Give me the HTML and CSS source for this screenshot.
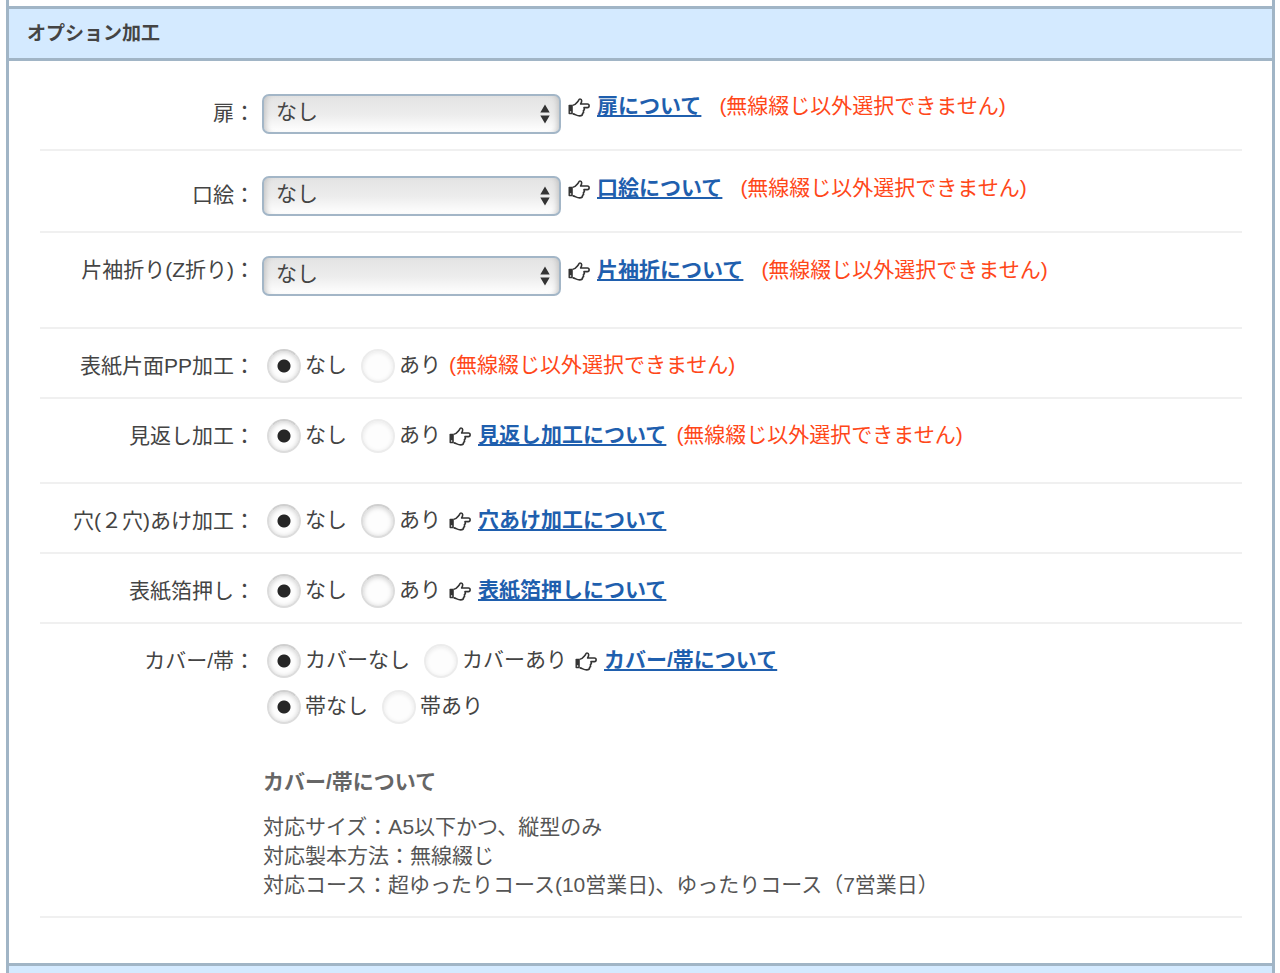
FILE: index.html
```
<!DOCTYPE html>
<html lang="ja">
<head>
<meta charset="utf-8">
<title>オプション加工</title>
<link rel="stylesheet" href="styles.css">
</head>
<body>
<svg class="defs" aria-hidden="true">
  <symbol id="hand" viewBox="0 0 22 19">
    <path d="M0.5 7.5Q0.5 6.7 1.3 6.7H4.8V16.3H1.3Q0.5 16.3 0.5 15.5Z" fill="#333"/>
    <circle cx="2.6" cy="14" r="0.8" fill="#fff"/>
    <path d="M4.8 7.3C7.2 7.2 8.6 5 10 3.3C10.7 2.4 10.8 1 12 1C14.3 1 14 4 12.6 6H19.4C21.7 6 21.7 9.6 19.4 9.6H16C16.7 11 16.3 12 15.4 12.7C15.9 14 15.4 14.9 14.6 15.4C14.6 17.2 13.4 17.9 11.6 17.9C8.6 17.9 7.4 16.2 4.8 15.9" fill="none" stroke="#333" stroke-width="1.6" stroke-linejoin="round"/>
  </symbol>
  <symbol id="arrows" viewBox="0 0 10 20">
    <path d="M5 0.5L9.7 8.5H0.3ZM5 19.5L9.7 11.5H0.3Z" fill="#333"/>
  </symbol>
</svg>
<form class="frame">
  <h2 class="bar">オプション加工</h2>
  <div class="rows">
    <div class="row row-select row-first">
      <label class="name" for="tobira">扉：</label>
      <div class="line">
        <span class="picker"><select id="tobira"><option>なし</option></select><svg class="arrows" aria-hidden="true"><use href="#arrows"/></svg></span>
        <svg class="hand" aria-hidden="true"><use href="#hand"/></svg>
        <a href="#tobira">扉について</a>
        <span class="warn">(無線綴じ以外選択できません)</span>
      </div>
    </div>
    <div class="row row-select">
      <label class="name" for="kuchie">口絵：</label>
      <div class="line">
        <span class="picker"><select id="kuchie"><option>なし</option></select><svg class="arrows" aria-hidden="true"><use href="#arrows"/></svg></span>
        <svg class="hand" aria-hidden="true"><use href="#hand"/></svg>
        <a href="#kuchie">口絵について</a>
        <span class="warn">(無線綴じ以外選択できません)</span>
      </div>
    </div>
    <div class="row row-select row-fold">
      <label class="name" for="sode">片袖折り(Z折り)：</label>
      <div class="line">
        <span class="picker"><select id="sode"><option>なし</option></select><svg class="arrows" aria-hidden="true"><use href="#arrows"/></svg></span>
        <svg class="hand" aria-hidden="true"><use href="#hand"/></svg>
        <a href="#sode">片袖折について</a>
        <span class="warn">(無線綴じ以外選択できません)</span>
      </div>
    </div>
    <div class="row" role="radiogroup" aria-labelledby="n-pp">
      <span class="name" id="n-pp">表紙片面PP加工：</span>
      <div class="line">
        <label class="choice"><input type="radio" name="pp" checked>なし</label>
        <label class="choice"><input type="radio" name="pp" disabled>あり</label>
        <span class="warn">(無線綴じ以外選択できません)</span>
      </div>
    </div>
    <div class="row row-tall" role="radiogroup" aria-labelledby="n-mikaeshi">
      <span class="name" id="n-mikaeshi">見返し加工：</span>
      <div class="line">
        <label class="choice"><input type="radio" name="mikaeshi" checked>なし</label>
        <label class="choice"><input type="radio" name="mikaeshi" disabled>あり</label>
        <svg class="hand" aria-hidden="true"><use href="#hand"/></svg>
        <a href="#n-mikaeshi">見返し加工について</a>
        <span class="warn">(無線綴じ以外選択できません)</span>
      </div>
    </div>
    <div class="row" role="radiogroup" aria-labelledby="n-ana">
      <span class="name" id="n-ana">穴(２穴)あけ加工：</span>
      <div class="line">
        <label class="choice"><input type="radio" name="ana" checked>なし</label>
        <label class="choice"><input type="radio" name="ana">あり</label>
        <svg class="hand" aria-hidden="true"><use href="#hand"/></svg>
        <a href="#n-ana">穴あけ加工について</a>
      </div>
    </div>
    <div class="row" role="radiogroup" aria-labelledby="n-haku">
      <span class="name" id="n-haku">表紙箔押し：</span>
      <div class="line">
        <label class="choice"><input type="radio" name="haku" checked>なし</label>
        <label class="choice"><input type="radio" name="haku">あり</label>
        <svg class="hand" aria-hidden="true"><use href="#hand"/></svg>
        <a href="#n-haku">表紙箔押しについて</a>
      </div>
    </div>
    <div class="row row-cover">
      <span class="name" id="n-cover">カバー/帯：</span>
      <div class="stack">
        <div class="line" role="radiogroup" aria-labelledby="n-cover">
          <label class="choice"><input type="radio" name="cover" checked>カバーなし</label>
          <label class="choice"><input type="radio" name="cover" disabled>カバーあり</label>
          <svg class="hand" aria-hidden="true"><use href="#hand"/></svg>
          <a href="#about-cover">カバー/帯について</a>
        </div>
        <div class="line" role="radiogroup" aria-labelledby="n-cover">
          <label class="choice"><input type="radio" name="obi" checked>帯なし</label>
          <label class="choice"><input type="radio" name="obi" disabled>帯あり</label>
        </div>
        <div class="about" id="about-cover">
          <h3>カバー/帯について</h3>
          <p>対応サイズ：A5以下かつ、縦型のみ<br>対応製本方法：無線綴じ<br>対応コース：超ゆったりコース(10営業日)、ゆったりコース（7営業日）</p>
        </div>
      </div>
    </div>
  </div>
  <div class="next"></div>
</form>
</body>
</html>
```
FILE: styles.css
```
* { box-sizing: border-box; }
body {
  margin: 0;
  padding: 0 5px 0 6px;
  background: #fff;
  color: #444;
  font-family: "Liberation Sans", "Noto Sans CJK JP", sans-serif;
  font-size: 21px;
  line-height: 32px;
}
.defs { position: absolute; width: 0; height: 0; }
.frame {
  display: flex;
  flex-direction: column;
  min-height: 100vh;
  padding-top: 6px;
  border: solid #a1b5c6;
  border-width: 0 3px;
}
.bar {
  margin: 0;
  padding: 9px 18px 8px;
  border: solid #a1b5c6;
  border-width: 3px 0;
  background: #d4eaff;
  font-size: 19px;
  font-weight: 700;
}
.rows { padding: 0 30px 45px 31px; }
.next {
  flex: 1;
  border-top: 3px solid #a1b5c6;
  background: #d4eaff;
}
.row {
  display: grid;
  grid-template-columns: 215px 1fr;
  column-gap: 12px;
  padding: 20px 0 14px;
  border-bottom: 2px solid #f0f0f0;
}
.name { text-align: right; line-height: 34px; white-space: nowrap; }
.line { display: flex; align-items: flex-start; white-space: nowrap; }
.row-select { column-gap: 7px; padding: 25px 0 15px; }
.row-select .name { line-height: 38px; }
.row-select .line { line-height: 24px; }
.row-first { padding-top: 33px; }
.row-fold { padding: 23px 0 31px; }
.row-fold .name, .row-fold .line { line-height: 28px; }
.row-tall { padding-bottom: 29px; }

.picker { position: relative; flex: 0 0 299px; height: 40px; }
.picker select {
  appearance: none;
  width: 100%;
  height: 40px;
  padding: 0 32px 4px 12px;
  border: 2px solid #a3b6c7;
  border-radius: 7px;
  background: linear-gradient(#e3e3e3, #ececec 50%, #fff);
  box-shadow: inset 6px 0 6px -5px #bbb, inset -6px 0 6px -5px #bbb;
  color: #444;
  font: inherit;
}
.arrows {
  position: absolute;
  top: 10px;
  right: 11px;
  width: 10px;
  height: 20px;
  pointer-events: none;
}
.hand { flex: none; width: 22px; height: 19px; margin: 8px 7px 0 8px; }
.row-select .hand { margin-top: 4px; margin-left: 7px; }
.row-fold .hand { margin-top: 6px; }
a {
  color: #1f5fae;
  font-weight: 700;
  text-decoration: underline;
  text-decoration-thickness: 2px;
  text-underline-offset: 2px;
}
.warn { margin-left: 10px; color: #ff4719; }
.choice + .warn { margin-left: 8px; }
.row-select .warn { margin-left: 18px; }
.choice { display: flex; }
.choice + .choice { margin-left: 14px; }
.choice input {
  appearance: none;
  flex: none;
  width: 34px;
  height: 34px;
  margin: 0 4px 0 0;
  border: 2px solid #dcdcdc;
  border-top-color: #cfcfcf;
  border-radius: 50%;
  background: #fdfdfd;
  box-shadow: inset 0 1px 5px #ccc;
}
.choice input:checked {
  background: radial-gradient(circle, #262626 6px, #fdfdfd 7px);
}
.choice input:disabled {
  border-color: #ececec;
  box-shadow: inset 0 1px 4px #e8e8e8;
}
.row-cover { padding-bottom: 17px; }
.stack { display: grid; row-gap: 12px; }
.about { margin: 30px 0 0 -4px; color: #555; }
.about h3 { margin: 0 0 14px; color: #666; font-size: 21px; line-height: 32px; }
.about p { margin: 0; line-height: 29px; }
```
